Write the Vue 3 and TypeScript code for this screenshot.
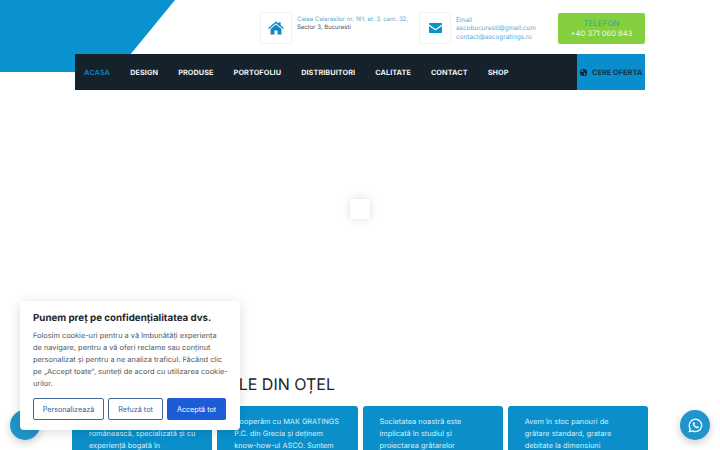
<template>
  <div class="page">
    <svg class="corner-shape" width="175" height="72" viewBox="0 0 175 72">
      <path d="M0 0H175L116 72H0Z" fill="#0a92ce" />
    </svg>

    <header class="site-header">
      <div class="top-row">
        <div class="info-item">
          <div class="info-icon">
            <svg width="16" height="14" viewBox="0 0 16 14">
              <path d="M8 0.4L10.6 2.6V1.2H12.6V4.3L15.8 7L14.9 8L8 2.2L1.1 8L0.2 7Z" fill="#0a86c0" />
              <path d="M8 3.4L13.4 7.9V13.6H9.6V9.6H6.4V13.6H2.6V7.9Z" fill="#0a86c0" />
            </svg>
          </div>
          <div class="info-text address">
            <span class="accent">Calea Calarasilor nr. 161, et. 3, cam. 32,</span>
            <span>Sector 3, Bucuresti</span>
          </div>
        </div>
        <div class="info-item">
          <div class="info-icon">
            <svg width="13" height="10" viewBox="0 0 13 10">
              <path d="M1 0H12C12.6 0 13 .4 13 1V1.6L6.5 6L0 1.6V1C0 .4 .4 0 1 0Z" fill="#0a92ce" />
              <path d="M0 3L6.5 7.4L13 3V9C13 9.6 12.6 10 12 10H1C.4 10 0 9.6 0 9Z" fill="#0a92ce" />
            </svg>
          </div>
          <div class="info-text email">
            <span class="accent">Email</span>
            <span class="accent">ascobucuresti@gmail.com</span>
            <span class="accent">contact@ascogratings.ro</span>
          </div>
        </div>
        <a class="phone-box">
          <span class="phone-label">TELEFON</span>
          <span class="phone-number">+40 371 060 843</span>
        </a>
      </div>

      <nav class="main-nav">
        <ul class="nav-links">
          <li v-for="link in links" :key="link" :class="{ active: link === 'ACASA' }">{{ link }}</li>
        </ul>
        <a class="quote-btn">
          <svg width="7" height="7" viewBox="0 0 10 10">
            <circle cx="5" cy="5" r="5" fill="#15212b" />
            <path d="M3 1.2L5.4 1.8L4.6 3.6L2.6 4.4L1.4 3.2ZM5.4 5L8 5.6L7 8.4L5.4 9Z" fill="#0a8ecb" />
          </svg>
          CERE OFERTA
        </a>
      </nav>
    </header>

    <main class="content">
      <h2 class="section-title">GRĂTARELE DIN OȚEL</h2>
      <div class="cards">
        <article v-for="card in cards" :key="card[0]" class="card">
          <p v-for="line in card" :key="line">{{ line }}</p>
        </article>
      </div>
    </main>

    <div class="loader" />

    <section class="cookie-box">
      <h3>Punem preț pe confidențialitatea dvs.</h3>
      <p>
        Folosim cookie-uri pentru a vă îmbunătăți experiența<br />
        de navigare, pentru a vă oferi reclame sau conținut<br />
        personalizat și pentru a ne analiza traficul. Făcând clic<br />
        pe „Accept toate”, sunteți de acord cu utilizarea cookie-<br />
        urilor.
      </p>
      <div class="cookie-actions">
        <button class="btn-outline custom" type="button">Personalizează</button>
        <button class="btn-outline refuse" type="button">Refuză tot</button>
        <button class="btn-solid" type="button">Acceptă tot</button>
      </div>
    </section>

    <div class="float-btn left" />
    <div class="float-btn right">
      <svg width="15" height="15" viewBox="0 0 16 16">
        <path d="M1.4 14.6L2.3 11.3A6.6 6.6 0 1 1 4.8 13.7Z" fill="none" stroke="#fff" stroke-width="1.4" stroke-linejoin="round" />
        <path d="M5.9 4.6C5.2 4.9 4.9 5.7 5.1 6.6C5.5 8.4 7.6 10.5 9.5 10.9C10.4 11.1 11.2 10.7 11.4 10C11.5 9.7 11.5 9.4 11.4 9.3L9.9 8.5L9.2 9.3C8.2 8.9 7.2 7.9 6.8 6.9L7.5 6.2L6.7 4.6C6.5 4.5 6.1 4.5 5.9 4.6Z" fill="#fff" />
      </svg>
    </div>
  </div>
</template>

<script setup lang="ts">
const links: string[] = ['ACASA', 'DESIGN', 'PRODUSE', 'PORTOFOLIU', 'DISTRIBUITORI', 'CALITATE', 'CONTACT', 'SHOP']

const cards: string[][] = [
  ['Suntem o companie', 'românească, specializată și cu', 'experiență bogată în'],
  ['Cooperăm cu MAK GRATINGS', 'P.C. din Grecia și deținem', 'know-how-ul ASCO. Suntem'],
  ['Societatea noastră este', 'implicată în studiul și', 'proiectarea grătarelor'],
  ['Avem în stoc panouri de', 'grătare standard, gratare', 'debitate la dimensiuni']
]
</script>

<style>
html,
body {
  margin: 0;
  background: #fff;
}
</style>

<style scoped>
.page {
  position: relative;
  width: 720px;
  height: 450px;
  overflow: hidden;
  background: #fff;
  font-family: Inter, 'Open Sans', sans-serif;
  text-rendering: geometricPrecision;
}

.corner-shape {
  position: absolute;
  left: 0;
  top: 0;
}

.site-header {
  position: relative;
  width: 570px;
  margin-left: 75px;
  padding-top: 12px;
}

.top-row {
  height: 42px;
  display: flex;
  justify-content: flex-end;
  align-items: flex-start;
}

.info-item {
  display: flex;
  gap: 5px;
  margin-right: 11px;
}

.info-item:nth-child(2) {
  margin-right: 22px;
}

.info-icon {
  width: 32px;
  height: 32px;
  display: flex;
  align-items: center;
  justify-content: center;
  border: 1px solid #f1f3f5;
  box-sizing: border-box;
  background: #fff;
}

.info-text {
  display: flex;
  flex-direction: column;
  font-size: 6px;
  line-height: 8.6px;
  color: #4c5660;
  white-space: nowrap;
  padding-top: 3.5px;
}

.address {
  width: 111px;
}

.email {
  width: 80px;
  font-size: 6.4px;
}

.accent {
  color: #56acd2;
}

.phone-box {
  width: 87px;
  height: 31px;
  margin-top: 1px;
  display: flex;
  flex-direction: column;
  align-items: center;
  justify-content: center;
  border-radius: 2px;
  background: #84cf3d;
  font-size: 7.6px;
  line-height: 10px;
}

.phone-label {
  color: #2d9fa8;
  letter-spacing: 0.2px;
}

.phone-number {
  color: #f2fbe6;
}

.main-nav {
  height: 36px;
  display: flex;
  justify-content: space-between;
  background: #15212b;
}

.nav-links {
  margin: 0;
  padding: 0 0 0 9px;
  display: flex;
  align-items: center;
  gap: 20px;
  list-style: none;
  color: #f1f3f5;
  font-size: 7.3px;
  font-weight: 700;
  letter-spacing: 0.07px;
}

.nav-links .active {
  color: #0b7fb8;
}

.quote-btn {
  width: 68px;
  display: flex;
  align-items: center;
  gap: 5px;
  padding-left: 3px;
  box-sizing: border-box;
  background: #0a8ecb;
  color: #0e3650;
  font-size: 7.4px;
  font-weight: 700;
  white-space: nowrap;
}

.content {
  position: absolute;
  left: 72px;
  top: 373px;
  width: 576px;
}

.section-title {
  width: 263px;
  margin: 0 0 11px;
  font-size: 16px;
  line-height: 22px;
  font-weight: 400;
  color: #1c2329;
  text-align: right;
  white-space: nowrap;
  direction: rtl;
}

.cards {
  display: grid;
  grid-template-columns: repeat(4, minmax(0, 1fr));
  gap: 5px;
}

.card {
  height: 70px;
  padding: 10px 6px 0 17px;
  border-radius: 3px;
  background: #0a8fcb;
  color: #d9f0fa;
  font-size: 7.35px;
  line-height: 12px;
}

.card p {
  margin: 0;
  white-space: nowrap;
}

.loader {
  position: absolute;
  left: 350px;
  top: 199px;
  width: 20px;
  height: 20px;
  border-radius: 2px;
  background: #fff;
  box-shadow: 0 0 10px rgba(0, 0, 0, 0.14);
}

.cookie-box {
  position: absolute;
  left: 20px;
  top: 301px;
  width: 220px;
  height: 129px;
  padding: 12px 13px 0;
  box-sizing: border-box;
  border-radius: 4px;
  background: #fff;
  box-shadow: 0 2px 12px rgba(0, 0, 0, 0.14);
  z-index: 3;
}

.cookie-box h3 {
  margin: 0 0 5px;
  font-size: 9.75px;
  line-height: 12px;
  font-weight: 700;
  color: #212529;
  white-space: nowrap;
}

.cookie-box p {
  margin: 0 0 8px;
  font-size: 7.4px;
  line-height: 12px;
  color: #505860;
  white-space: nowrap;
}

.cookie-actions {
  display: flex;
  gap: 4px;
}

.cookie-actions button {
  height: 22px;
  padding: 0;
  border-radius: 2px;
  box-sizing: border-box;
  font-family: inherit;
  font-size: 7.2px;
}

.btn-outline {
  border: 1px solid #45689a;
  background: #fff;
  color: #2b5fa8;
}

.custom {
  width: 71px;
}

.refuse {
  width: 55px;
}

.btn-solid {
  width: 59px;
  border: 0;
  background: #1c5cd6;
  color: #fff;
}

.float-btn {
  position: absolute;
  top: 410px;
  width: 30px;
  height: 30px;
  display: flex;
  align-items: center;
  justify-content: center;
  border-radius: 50%;
  background: #1f95cb;
  box-shadow: 0 3px 8px rgba(0, 0, 0, 0.2);
}

.float-btn.left {
  left: 10px;
}

.float-btn.right {
  left: 680px;
}
</style>
